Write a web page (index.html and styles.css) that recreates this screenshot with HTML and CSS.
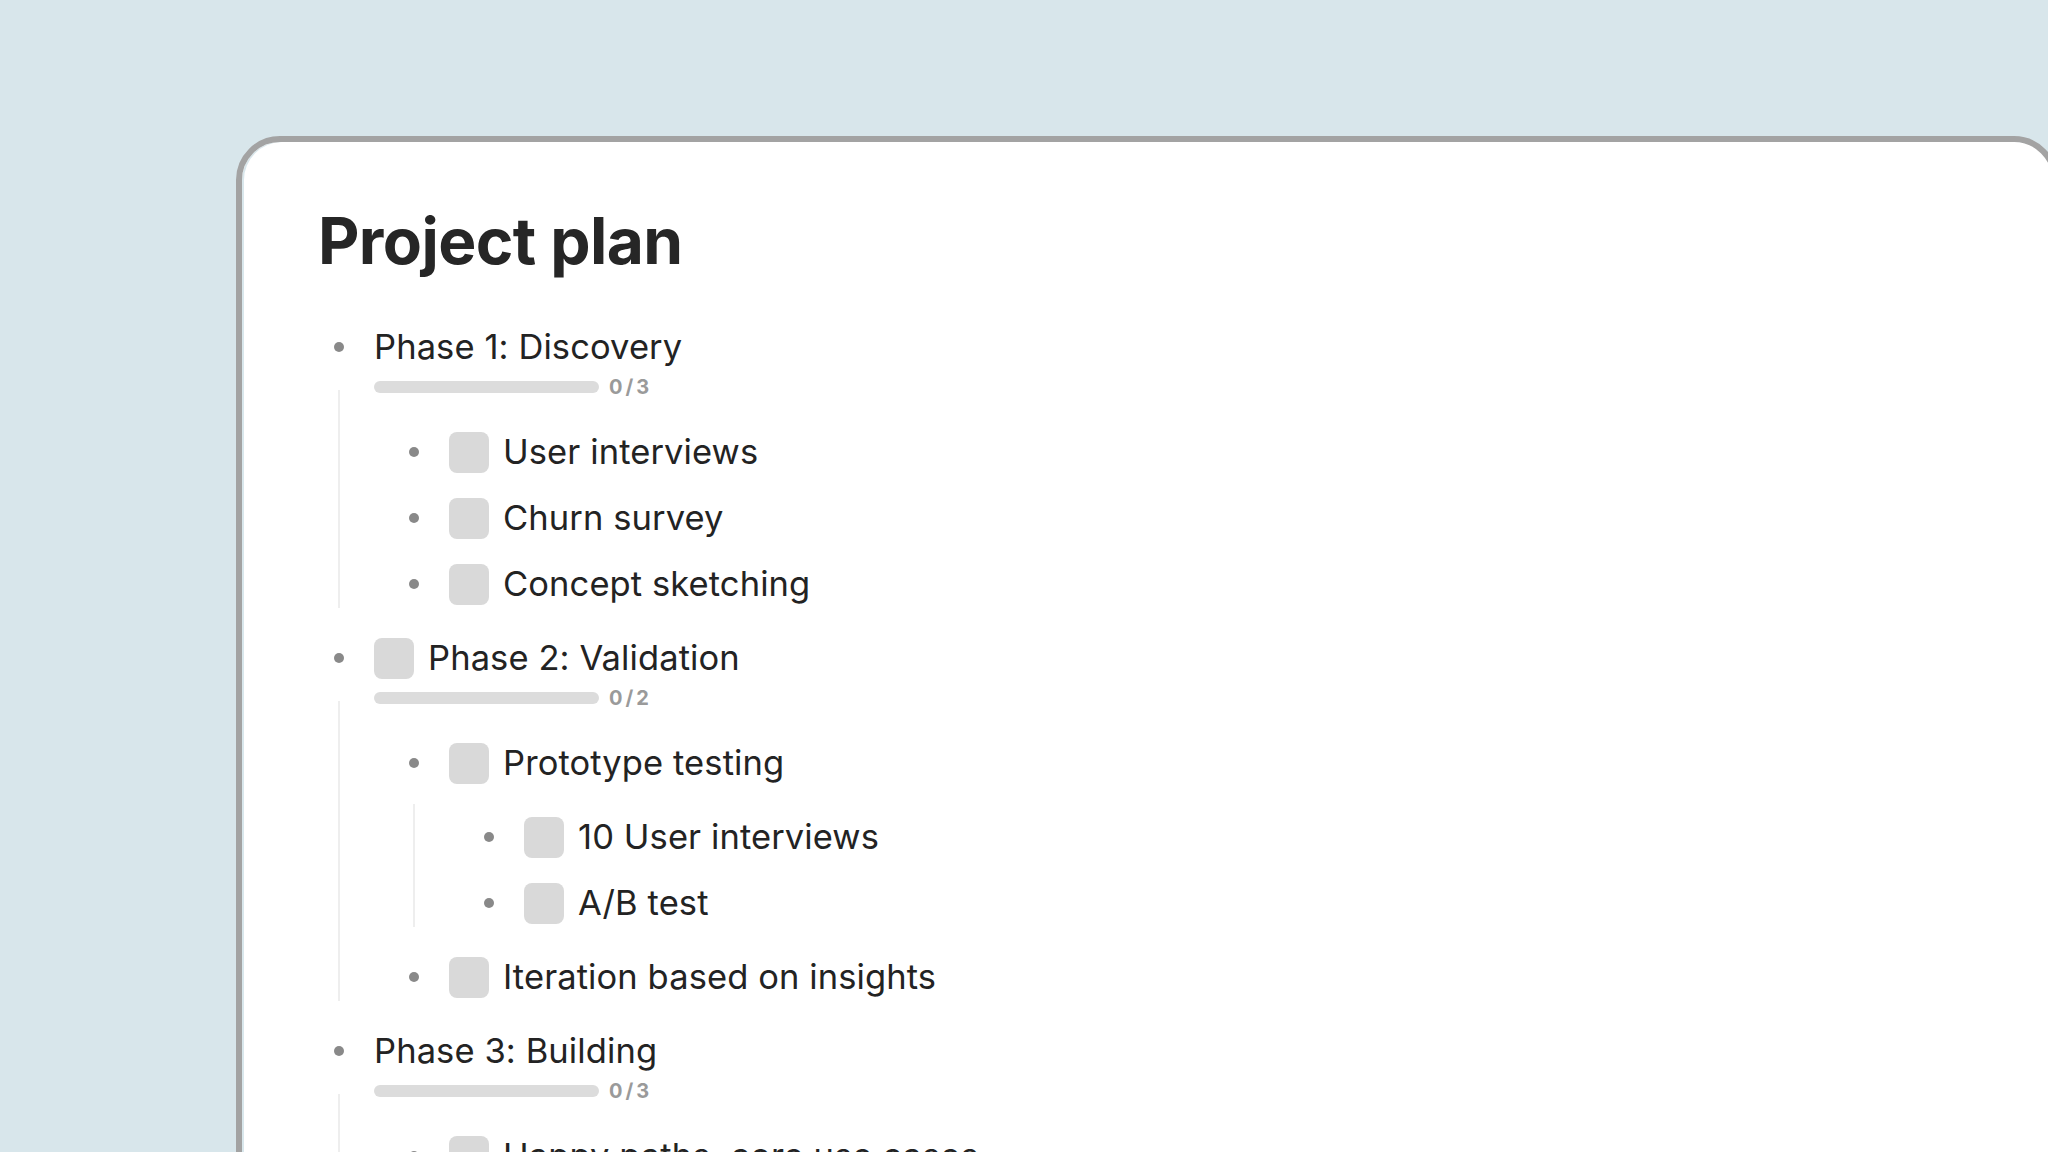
FILE: index.html
```html
<!DOCTYPE html>
<html lang="en">
<head>
<meta charset="utf-8">
<title>Project plan</title>
<link rel="stylesheet" href="styles.css">
</head>
<body>
<div class="window">
  <h1 class="title">Project plan</h1>
  <ul class="tree">
    <li class="node">
      <div class="row"><span class="bullet"></span><span class="label">Phase 1: Discovery</span></div>
      <div class="progress"><span class="bar"></span><span class="count">0/3</span></div>
      <ul class="children phase-children">
        <li class="node"><div class="row"><span class="bullet"></span><span class="check"></span><span class="label">User interviews</span></div></li>
        <li class="node"><div class="row"><span class="bullet"></span><span class="check"></span><span class="label">Churn survey</span></div></li>
        <li class="node"><div class="row"><span class="bullet"></span><span class="check"></span><span class="label">Concept sketching</span></div></li>
      </ul>
    </li>
    <li class="node">
      <div class="row"><span class="bullet"></span><span class="check"></span><span class="label">Phase 2: Validation</span></div>
      <div class="progress"><span class="bar"></span><span class="count">0/2</span></div>
      <ul class="children phase-children">
        <li class="node">
          <div class="row"><span class="bullet"></span><span class="check"></span><span class="label">Prototype testing</span></div>
          <ul class="children">
            <li class="node"><div class="row"><span class="bullet"></span><span class="check"></span><span class="label">10 User interviews</span></div></li>
            <li class="node"><div class="row"><span class="bullet"></span><span class="check"></span><span class="label">A/B test</span></div></li>
          </ul>
        </li>
        <li class="node"><div class="row"><span class="bullet"></span><span class="check"></span><span class="label">Iteration based on insights</span></div></li>
      </ul>
    </li>
    <li class="node">
      <div class="row"><span class="bullet"></span><span class="label">Phase 3: Building</span></div>
      <div class="progress"><span class="bar"></span><span class="count">0/3</span></div>
      <ul class="children phase-children">
        <li class="node"><div class="row"><span class="bullet"></span><span class="check"></span><span class="label">Happy paths, core use cases</span></div></li>
      </ul>
    </li>
  </ul>
</div>
</body>
</html>
```
FILE: styles.css
```css
html, body {
  margin: 0;
  padding: 0;
}

body {
  width: 2048px;
  height: 1152px;
  overflow: hidden;
  background: #d8e6eb;
  font-family: "Inter", "Noto Sans", sans-serif;
  color: #262626;
}

.window {
  box-sizing: border-box;
  margin: 136px 0 0 236px;
  width: 1822px;
  height: 1200px;
  background: #ffffff;
  border: 6px solid #a3a3a3;
  border-radius: 44px;
  box-shadow: inset 2px 0 0 #d9e7ec;
  padding: 60px 0 0 76px;
}

.title {
  margin: 0 0 34px 0;
  font-size: 64px;
  line-height: 78px;
  font-weight: 700;
  letter-spacing: -0.6px;
  color: #262626;
}

.tree,
.children {
  list-style: none;
  padding: 0;
}

.tree {
  margin: 0 0 0 -3px;
}

.children {
  position: relative;
  margin: 8px 0 8px 75px;
}

.children::before {
  content: "";
  position: absolute;
  left: -52px;
  top: 0;
  bottom: 9px;
  width: 2px;
  background: #eeeeee;
}

.phase-children {
  margin-top: 24px;
}

.phase-children::before {
  top: -29px;
}

.row {
  display: flex;
  align-items: center;
  height: 66px;
}

.bullet {
  flex: none;
  width: 48px;
  margin-right: 11px;
  display: flex;
  justify-content: center;
}

.bullet::before {
  content: "";
  width: 10px;
  height: 10px;
  border-radius: 50%;
  background: #898989;
}

.check {
  flex: none;
  width: 40px;
  height: 41px;
  border-radius: 8px;
  background: #d9d9d9;
  margin-right: 14px;
}

.label {
  font-size: 34.5px;
  line-height: 42px;
  font-weight: 400;
  letter-spacing: 0.1px;
  white-space: nowrap;
  color: #232323;
}

.progress {
  display: flex;
  align-items: center;
  height: 16px;
  margin: -1px 0 0 59px;
}

.bar {
  width: 225px;
  height: 12px;
  border-radius: 6px;
  background: #dcdcdc;
}

.count {
  margin-left: 10px;
  font-size: 20px;
  font-weight: 700;
  letter-spacing: 3px;
  color: #9a9a9a;
}
```
